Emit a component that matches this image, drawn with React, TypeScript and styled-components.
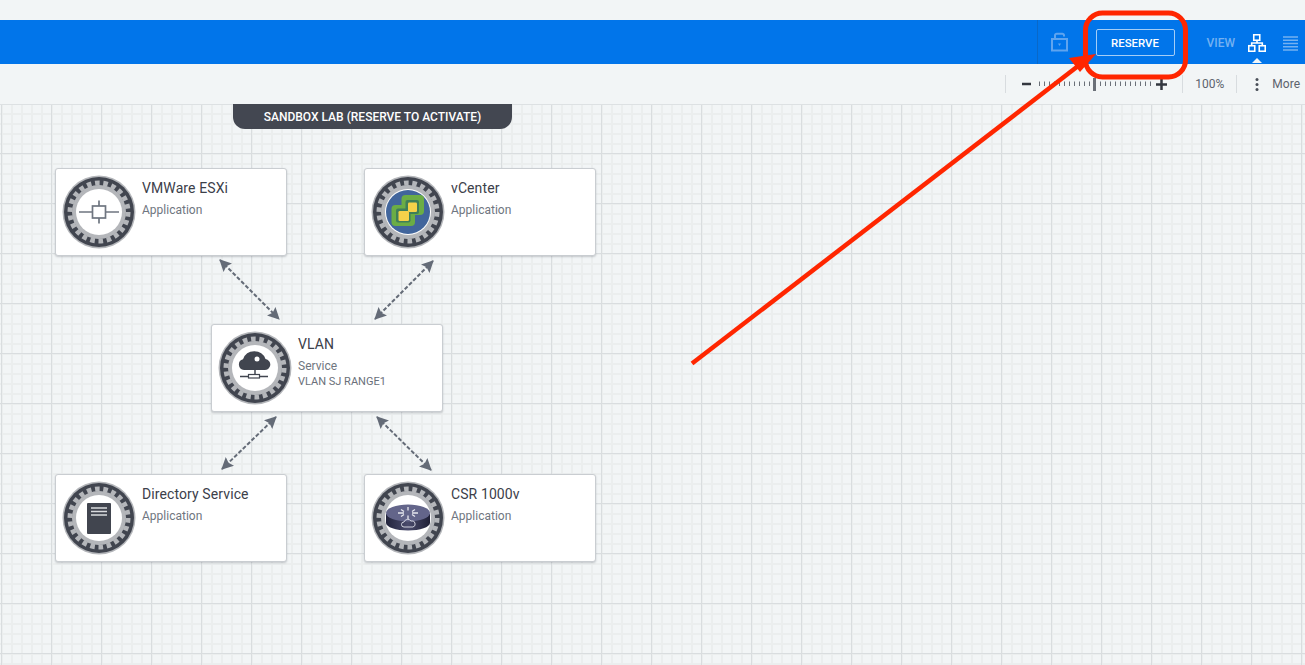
import React from 'react';
import styled, { createGlobalStyle } from 'styled-components';

const GlobalStyle = createGlobalStyle`
  html, body {
    margin: 0;
    padding: 0;
    background: #f2f5f6;
    font-family: Roboto, "Liberation Sans", sans-serif;
    overflow: hidden;
  }
`;

const Page = styled.div`
  position: relative;
  width: 1305px;
  height: 665px;
  display: flex;
  flex-direction: column;
  overflow: hidden;
`;

const TopStrip = styled.div`
  height: 20px;
  flex: none;
  background: #f2f5f6;
`;

const BlueBar = styled.div`
  height: 44px;
  flex: none;
  background: #0175ea;
  display: flex;
  align-items: center;
  justify-content: flex-end;
`;

const BarDivider = styled.div`
  width: 1px;
  height: 44px;
  background: #0a68c8;
  margin-right: 12px;
`;

const ReserveButton = styled.button`
  width: 79px;
  height: 27px;
  margin-left: 26px;
  border: 1px solid #a5cdf6;
  border-radius: 2px;
  background: transparent;
  color: #fff;
  font: 500 11.4px Roboto, sans-serif;
  padding: 1px 0 0;
`;

const ViewLabel = styled.span`
  margin-left: 32px;
  padding-top: 1px;
  color: #74b1f1;
  font-size: 12px;
  font-weight: 500;
`;

const ViewButton = styled.div<{ $active?: boolean }>`
  position: relative;
  display: flex;
  margin-top: 2px;
  margin-left: ${(p) => (p.$active ? 13 : 17)}px;
  margin-right: ${(p) => (p.$active ? 0 : 7)}px;

  ${(p) =>
    p.$active &&
    `&::after {
      content: '';
      position: absolute;
      left: 4px;
      top: 24px;
      border: 5px solid transparent;
      border-top: 0;
      border-bottom-color: #f2f5f6;
    }`}
`;

const Toolbar = styled.div`
  height: 40px;
  flex: none;
  background: #f2f5f6;
  display: flex;
  align-items: center;
  justify-content: flex-end;
  padding-right: 5px;
  color: #5d636d;
  font-size: 12px;
`;

const ToolDivider = styled.div`
  width: 1px;
  height: 18px;
  background: #d8dcdf;
`;

const ZoomControl = styled.div`
  display: flex;
  margin: 0 14px 0 16px;
`;

const Percent = styled.span`
  margin: 0 12px 0 12px;
`;

const MoreDots = styled.div`
  display: flex;
  margin: 0 13px 0 18px;
`;

const Canvas = styled.div`
  position: relative;
  flex: 1;
  box-shadow: inset 0 1px 0 #dde1e3;
  background-color: #f2f5f6;
  background-image:
    linear-gradient(to right, #d9dddf 1px, transparent 1px),
    linear-gradient(to bottom, #d9dddf 1px, transparent 1px),
    linear-gradient(to right, #ebeeee 2px, transparent 2px),
    linear-gradient(to bottom, #ebeeee 2px, transparent 2px);
  background-size: 50px 50px, 50px 50px, 10px 10px, 10px 10px;
  background-position: 1px 49px, 1px 49px, 1px 9px, 1px 9px;
`;

const Banner = styled.div`
  position: absolute;
  left: 233px;
  top: 0;
  width: 279px;
  height: 25px;
  background: #434751;
  border-radius: 0 0 12px 12px;
  color: #fff;
  font-size: 12px;
  font-weight: 500;
  line-height: 26px;
  text-align: center;
`;

const Node = styled.div<{ $x: number; $y: number }>`
  position: absolute;
  left: ${(p) => p.$x}px;
  top: ${(p) => p.$y}px;
  box-sizing: border-box;
  width: 232px;
  height: 88px;
  background: #fff;
  border: 1px solid #c9cdd1;
  border-radius: 3px;
  box-shadow: 0 1px 2px rgba(60, 65, 75, 0.25);
  display: flex;
  padding: 6px 6px;
`;

const IconSlot = styled.div`
  width: 74px;
  height: 74px;
  flex: none;
`;

const NodeText = styled.div`
  margin-left: 6px;
  padding-top: 5px;
`;

const NodeTitle = styled.div`
  color: #3c404a;
  font-size: 14px;
  line-height: 17px;
  letter-spacing: 0.1px;
`;

const NodeType = styled.div`
  margin-top: 6px;
  color: #6f7680;
  font-size: 12px;
  line-height: 15px;
`;

const NodeDetail = styled.div`
  margin-top: 1px;
  color: #6a707a;
  font-size: 11px;
  line-height: 13px;
`;

const Overlay = styled.svg`
  position: absolute;
  left: 0;
  top: 0;
  pointer-events: none;
`;

const Gear = ({ children }: { children?: React.ReactNode }) => (
  <svg width="74" height="74" viewBox="0 0 74 74">
    <circle cx="37" cy="37" r="36.500" fill="#b4b6ba" />
    <circle cx="37" cy="37" r="35" fill="#41454f" />
    <circle cx="37" cy="37" r="29" fill="none" stroke="#b4b6ba" strokeWidth="5" strokeDasharray="4.600 3.680" />
    <circle cx="37" cy="37" r="27" fill="#b4b6ba" />
    <circle cx="37" cy="37" r="23" fill="#fff" />
    {children}
  </svg>
);

const EsxiGlyph = () => (
  <g stroke="#6f7680" strokeWidth="1.700" fill="none">
    <rect x="30.500" y="31" width="13" height="12" />
    <path d="M17 37h13.500M43.500 37H57M37 25.500V31M37 43v5.500" />
  </g>
);

const VCenterGlyph = () => (
  <g>
    <circle cx="37" cy="37" r="22" fill="#41659c" />
    <rect x="30.500" y="20" width="22.500" height="20" rx="4" fill="#6bad45" />
    <rect x="20.500" y="30" width="23.500" height="21" rx="4" fill="#6bad45" />
    <rect x="34.500" y="25" width="13.500" height="14" rx="2" fill="#3f7f58" />
    <rect x="25" y="33.500" width="14.500" height="14" rx="2" fill="#3f7f58" />
    <rect x="37" y="27.500" width="9" height="9.500" rx="1.200" fill="#f6d24a" />
    <rect x="27.500" y="36" width="10.500" height="10" rx="1.200" fill="#f6d24a" />
  </g>
);

const VlanGlyph = () => (
  <g>
    <path
      d="M26 39a5.500 5.500 0 0 1-1-10.800A12 12 0 0 1 47.500 28 5.500 5.500 0 0 1 46 39z"
      fill="#41454f"
    />
    <circle cx="39" cy="28" r="2.500" fill="#fff" />
    <path d="M37 39v5" stroke="#41454f" strokeWidth="1.500" />
    <path d="M22 45.500h8M42 45.500h8" stroke="#41454f" strokeWidth="1.500" />
    <rect x="30.500" y="43.500" width="11" height="3.500" fill="none" stroke="#41454f" strokeWidth="1.200" />
  </g>
);

const DirectoryGlyph = () => (
  <g>
    <rect x="25" y="22" width="24" height="31" rx="1" fill="#41454f" />
    <path d="M29 27h16M29 30.500h16M29 34h16" stroke="#d9dbde" strokeWidth="1.500" />
  </g>
);

const RouterGlyph = () => (
  <g>
    <defs>
      <linearGradient id="puck" x1="0" x2="1" y1="0" y2="0">
        <stop offset="0" stopColor="#23253d" />
        <stop offset="0.5" stopColor="#4a4b6c" />
        <stop offset="1" stopColor="#1f2036" />
      </linearGradient>
    </defs>
    <path d="M15 33v9c0 4 10 7.500 22 7.500s22-3.500 22-7.500v-9z" fill="url(#puck)" />
    <ellipse cx="37" cy="32" rx="22" ry="8.500" fill="#63658a" />
    <path
      d="M27 32h6M41 32h6M37 26v3.500M37 34.500V38M30 28.500l3 2M44 35.500l-3-2M44 28.500l-3 2M30 35.500l3-2"
      stroke="#e6e7ee"
      strokeWidth="1.300"
    />
    <path
      d="M33 46a2.500 2.500 0 0 1 0-5 4 4 0 0 1 7-1 3 3 0 0 1 2 6z"
      fill="none"
      stroke="#dfe0ea"
      strokeWidth="0.900"
    />
  </g>
);

const NODES = [
  { id: 'esxi', x: 55, y: 64, title: 'VMWare ESXi', type: 'Application', glyph: <EsxiGlyph /> },
  { id: 'vcenter', x: 364, y: 64, title: 'vCenter', type: 'Application', glyph: <VCenterGlyph /> },
  { id: 'vlan', x: 211, y: 220, title: 'VLAN', type: 'Service', detail: 'VLAN SJ RANGE1', glyph: <VlanGlyph /> },
  { id: 'directory', x: 55, y: 370, title: 'Directory Service', type: 'Application', glyph: <DirectoryGlyph /> },
  { id: 'csr', x: 364, y: 370, title: 'CSR 1000v', type: 'Application', glyph: <RouterGlyph /> },
];

const LINKS = [
  [220, 156, 279, 215],
  [433, 157, 375, 215],
  [276, 313, 222, 365],
  [377, 313, 431, 366],
];

const TICKS = Array.from({ length: 11 }, (_, i) => i * 5);

const App = () => {
  return (
    <Page>
      <GlobalStyle />
      <TopStrip />
      <BlueBar>
        <BarDivider />
        <svg width="20" height="20" viewBox="0 0 20 20" fill="none" stroke="#5fa4ef" strokeWidth="2">
          <rect x="2" y="7" width="15" height="11.500" />
          <path d="M5 6.500V3.500a1.700 1.700 0 0 1 1.700-1.700h5.600a1.700 1.700 0 0 1 1.700 1.700v1" />
          <path d="M8 11.500h3l-1.500 2.500z" fill="#5fa4ef" stroke="none" />
        </svg>
        <ReserveButton>RESERVE</ReserveButton>
        <ViewLabel>VIEW</ViewLabel>
        <ViewButton $active>
          <svg width="18" height="18" viewBox="0 0 18 18" fill="none" stroke="#fff" strokeWidth="1.600">
            <rect x="5.750" y="0.750" width="6" height="5.500" />
            <rect x="0.750" y="11.750" width="6" height="5.500" />
            <rect x="11.250" y="11.750" width="6" height="5.500" />
            <path d="M9 6.500v3M3.700 11.500V9h10.600v2.500" />
          </svg>
        </ViewButton>
        <ViewButton>
          <svg width="15" height="15" viewBox="0 0 15 15" stroke="#74b1f1" strokeWidth="1.500">
            <path d="M0 1h15M0 4.250h15M0 7.500h15M0 10.750h15M0 14h15" />
          </svg>
        </ViewButton>
      </BlueBar>
      <Toolbar>
        <ToolDivider />
        <ZoomControl>
          <svg width="146" height="14" viewBox="0 0 146 14">
            <path d="M0 7h9" stroke="#33373f" strokeWidth="2.500" />
            <g stroke="#6b7078" strokeWidth="1">
              {TICKS.map((t) => (
                <path key={t} d={`M${17.500 + t} 4.500v4.500`} />
              ))}
              {TICKS.map((t) => (
                <path key={t} d={`M${78.500 + t} 4.500v4.500`} />
              ))}
            </g>
            <path d="M72.500 1v13" stroke="#6b7078" strokeWidth="3" />
            <path d="M134 7.500h11M139.500 2v11" stroke="#33373f" strokeWidth="2.500" />
          </svg>
        </ZoomControl>
        <ToolDivider />
        <Percent>100%</Percent>
        <ToolDivider />
        <MoreDots>
          <svg width="4" height="13" viewBox="0 0 4 13" fill="#4a4f58">
            <circle cx="2" cy="1.500" r="1.500" />
            <circle cx="2" cy="6.500" r="1.500" />
            <circle cx="2" cy="11.500" r="1.500" />
          </svg>
        </MoreDots>
        <span>More</span>
      </Toolbar>
      <Canvas>
        <Banner>SANDBOX LAB (RESERVE TO ACTIVATE)</Banner>
        <Overlay width="1305" height="561">
          <defs>
            <marker id="head" viewBox="0 0 12 12" refX="11" refY="6" markerWidth="12" markerHeight="12" markerUnits="userSpaceOnUse" orient="auto-start-reverse">
              <path d="M0 0L12 6L0 12L2 6z" fill="#646b77" />
            </marker>
          </defs>
          {LINKS.map(([x1, y1, x2, y2]) => (
            <line
              key={`${x1}-${y1}`}
              x1={x1}
              y1={y1}
              x2={x2}
              y2={y2}
              stroke="#646b77"
              strokeWidth="2"
              strokeDasharray="4 2"
              markerStart="url(#head)"
              markerEnd="url(#head)"
            />
          ))}
        </Overlay>
        {NODES.map((node) => (
          <Node key={node.id} $x={node.x} $y={node.y}>
            <IconSlot>
              <Gear>{node.glyph}</Gear>
            </IconSlot>
            <NodeText>
              <NodeTitle>{node.title}</NodeTitle>
              <NodeType>{node.type}</NodeType>
              {node.detail && <NodeDetail>{node.detail}</NodeDetail>}
            </NodeText>
          </Node>
        ))}
      </Canvas>
      <Overlay width="1305" height="665">
        <rect x="1085.500" y="13" width="100" height="64" rx="17" fill="none" stroke="#ff2600" strokeWidth="5" />
        <path d="M692 363.500L1082 63" stroke="#ff2600" strokeWidth="4.500" />
        <path d="M1096 54L1069 58L1080 72z" fill="#ff2600" />
      </Overlay>
    </Page>
  );
};

export default App;
